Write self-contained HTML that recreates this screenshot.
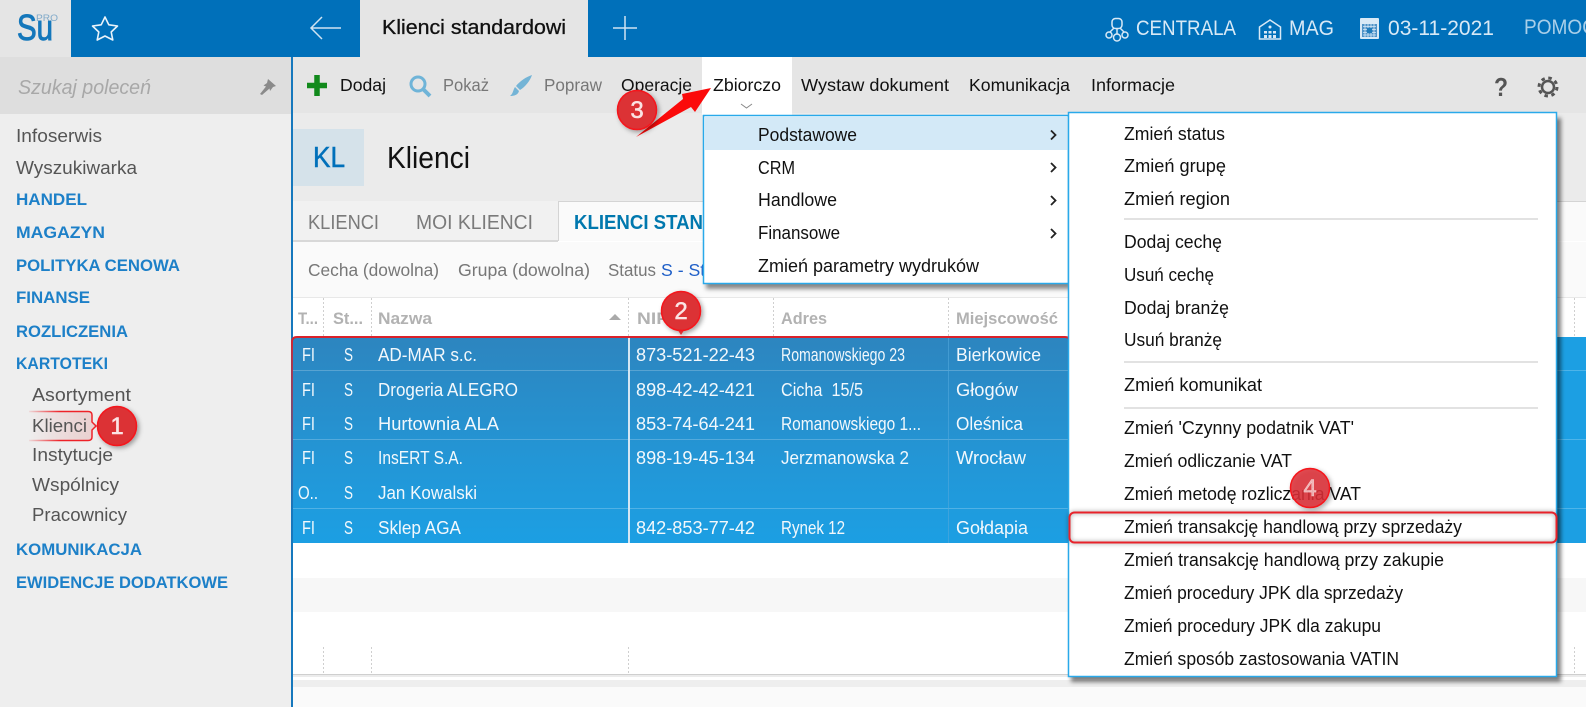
<!DOCTYPE html>
<html lang="pl"><head><meta charset="utf-8"><title>Klienci standardowi</title>
<style>
html,body{margin:0;padding:0;width:1586px;height:707px;overflow:hidden;background:#fff}
svg{display:block}
text{font-family:"Liberation Sans",sans-serif;font-size:18px;fill:#111}
.side{fill:#555;font-size:18.500px}
.hd{font-weight:bold;fill:#1d80c8;font-size:17px}
.top{fill:#d8e9f6;font-size:21px}
.tb{font-size:17.500px}
.gr{fill:#777}
.th{font-weight:bold;fill:#b2b2b2;font-size:17px}
.row{fill:#f2f8fc;font-size:18px}
.badge{fill:#fbe4e4;font-size:24px;stroke:#fbe4e4;stroke-width:.5;text-anchor:middle}
</style></head><body>
<svg width="1586" height="707" viewBox="0 0 1586 707" xmlns="http://www.w3.org/2000/svg">
<defs>
<linearGradient id="sel" x1="0" y1="0" x2="0" y2="1"><stop offset="0" stop-color="#2d85bf"/><stop offset=".6" stop-color="#2396d6"/><stop offset="1" stop-color="#1c9fe3"/></linearGradient>
<linearGradient id="fadeDown" x1="0" y1="336" x2="0" y2="510" gradientUnits="userSpaceOnUse"><stop offset="0" stop-color="#dc2028"/><stop offset=".1" stop-color="#dc2028" stop-opacity=".8"/><stop offset="1" stop-color="#dc2028" stop-opacity="0"/></linearGradient>
<linearGradient id="fadeL" x1="29" y1="0" x2="60" y2="0" gradientUnits="userSpaceOnUse"><stop offset="0" stop-color="#ee2228" stop-opacity=".1"/><stop offset="1" stop-color="#ee2228"/></linearGradient>
<linearGradient id="pink" x1="0" y1="0" x2="1" y2="0"><stop offset="0" stop-color="#e06060" stop-opacity="0"/><stop offset="1" stop-color="#d88" stop-opacity=".3"/></linearGradient>
<filter id="sh" x="-20%" y="-20%" width="140%" height="140%"><feGaussianBlur stdDeviation="2"/></filter>
<filter id="bs" x="-30%" y="-30%" width="170%" height="170%"><feDropShadow dx="2" dy="2" stdDeviation="2.500" flood-color="#000" flood-opacity=".35"/></filter>
</defs>

<!-- base -->
<rect width="1586" height="707" fill="#fff"/>
<rect x="0" y="57" width="291" height="650" fill="#eeeeee"/>
<rect x="0" y="57" width="291" height="57" fill="#dedede"/>
<rect x="293" y="57" width="1293" height="56" fill="#e5e5e5"/>
<rect x="293" y="113" width="1293" height="88" fill="#ebebeb"/>
<rect x="293" y="201" width="1293" height="40" fill="#f1f1f1"/>
<rect x="293" y="240" width="265" height="2" fill="#d8d8d8"/>
<rect x="558" y="201" width="1028" height="40" fill="#fafafa"/>
<rect x="558" y="201" width="1028" height="1" fill="#d4d4d4"/>
<rect x="558" y="201" width="1" height="40" fill="#d4d4d4"/>
<rect x="293" y="242" width="1293" height="55" fill="#fafafa"/>
<rect x="293" y="297" width="1293" height="1" fill="#e8e8e8"/>
<rect x="293" y="298" width="1293" height="38" fill="#fff"/>
<rect x="291" y="57" width="2" height="650" fill="#1678bd"/>

<!-- top bar -->
<rect width="1586" height="57" fill="#0070ba"/>
<rect width="71" height="57" fill="#e5e5e5"/>
<rect x="360" width="228" height="57" fill="#e5e5e5"/>
<text x="17" y="40" style="font-size:36px;fill:#1477bb;stroke:#1477bb;stroke-width:1" textLength="36" lengthAdjust="spacingAndGlyphs">Su</text>
<text x="36" y="21" style="font-size:9.500px;fill:#7fa9c9" textLength="22" lengthAdjust="spacingAndGlyphs">PRO</text>
<polygon points="105,17 108.800,24.800 117.500,26 111.200,32 112.800,40 105,36 97.200,40 98.800,32 92.500,26 101.200,24.800" fill="none" stroke="#eaf3fa" stroke-width="1.600" stroke-linejoin="round"/>
<path d="M341 28H311M322 17L311 28L322 39" fill="none" stroke="#cfe3f2" stroke-width="1.500"/>
<text x="382" y="34" style="font-size:20px;stroke:#111;stroke-width:.3" textLength="184" lengthAdjust="spacingAndGlyphs">Klienci standardowi</text>
<path d="M625 16V40M613 28H637" stroke="#cfe3f2" stroke-width="1.500" fill="none"/>
<g fill="none" stroke="#d8e9f6" stroke-width="1.500">
<rect x="1112" y="18.500" width="10" height="10" rx="3.500"/>
<path d="M1117 28.500V34M1114 28L1110 32M1120 28L1124 32"/>
<circle cx="1109" cy="35" r="3"/><circle cx="1117" cy="37.500" r="3.500"/><circle cx="1125" cy="35" r="3"/>
<path d="M1259.500 27L1270 20L1280.500 27V39H1259.500Z"/>
</g>
<g fill="#d8e9f6">
<circle cx="1270" cy="27" r="1.500"/>
<rect x="1264" y="31" width="3" height="2.500"/><rect x="1268.500" y="31" width="3" height="2.500"/><rect x="1273" y="31" width="3" height="2.500"/>
<rect x="1264" y="35" width="3" height="3"/><rect x="1268.500" y="35" width="3" height="3"/><rect x="1273" y="35" width="3" height="3"/>
<rect x="1360" y="18" width="19" height="21" rx="1"/>
</g>
<rect x="1362" y="24" width="15" height="13" fill="#4f93c8"/>
<path d="M1363 26.500H1376M1363 29.500H1376M1363 32.500H1376M1363 35H1376M1365 24V37M1368 24V37M1371 24V37M1374 24V37" stroke="#d8e9f6" stroke-width=".8" fill="none"/>
<rect x="1367" y="28" width="5" height="5" fill="#1f7cbc"/>
<text class="top" x="1136" y="35" textLength="100" lengthAdjust="spacingAndGlyphs">CENTRALA</text>
<text class="top" x="1289" y="35" textLength="45" lengthAdjust="spacingAndGlyphs">MAG</text>
<text class="top" x="1388" y="35" textLength="106" lengthAdjust="spacingAndGlyphs">03-11-2021</text>
<text class="top" x="1524" y="34" style="fill:#a9cfe9" textLength="72" lengthAdjust="spacingAndGlyphs">POMOC</text>

<!-- search -->
<text x="18" y="94" style="font-size:20px;font-style:italic;fill:#a8a8a8" textLength="133" lengthAdjust="spacingAndGlyphs">Szukaj poleceń</text>
<path d="M268 79L276 86L273 87L270 91L269.500 88.500L262 95L260 94L266 86.500L263.500 85.500L267 83Z" fill="#8a8a8a"/>

<!-- toolbar -->
<path d="M317 75V96M307 85.500H327" stroke="#128a1c" stroke-width="5.500" fill="none"/>
<text class="tb" x="340" y="91" textLength="46" lengthAdjust="spacingAndGlyphs">Dodaj</text>
<circle cx="418" cy="84" r="7" fill="none" stroke="#6fb4d8" stroke-width="3"/>
<path d="M423 89L430 96" stroke="#6fb4d8" stroke-width="4"/>
<text class="tb gr" x="443" y="91" textLength="46" lengthAdjust="spacingAndGlyphs">Pokaż</text>
<path d="M532 75C530 81 525 87 520 90L516 86C520 81 526 77 532 75Z" fill="#74b4d6"/>
<path d="M515 87L519 91C518 95 514 96 510 96C513 94 513 90 515 87Z" fill="#74b4d6"/>
<text class="tb gr" x="544" y="91" textLength="58" lengthAdjust="spacingAndGlyphs">Popraw</text>
<text class="tb" x="621" y="91" textLength="71" lengthAdjust="spacingAndGlyphs">Operacje</text>
<rect x="702" y="57" width="90" height="58" fill="#fff"/>
<text class="tb" x="713" y="91" textLength="68" lengthAdjust="spacingAndGlyphs">Zbiorczo</text>
<path d="M741 104L746.500 108L752 104" fill="none" stroke="#888" stroke-width="1"/>
<text class="tb" x="801" y="91" textLength="148" lengthAdjust="spacingAndGlyphs">Wystaw dokument</text>
<text class="tb" x="969" y="91" textLength="101" lengthAdjust="spacingAndGlyphs">Komunikacja</text>
<text class="tb" x="1091" y="91" textLength="84" lengthAdjust="spacingAndGlyphs">Informacje</text>
<text x="1494" y="96" style="font-size:26px;font-weight:bold;fill:#555" textLength="14" lengthAdjust="spacingAndGlyphs">?</text>
<circle cx="1548" cy="87" r="6" fill="none" stroke="#555" stroke-width="2.500"/>
<circle cx="1548" cy="87" r="9" fill="none" stroke="#555" stroke-width="3" stroke-dasharray="3.500 3.570"/>

<!-- sidebar -->
<text class="side" x="16" y="142" textLength="86" lengthAdjust="spacingAndGlyphs">Infoserwis</text>
<text class="side" x="16" y="174" textLength="121" lengthAdjust="spacingAndGlyphs">Wyszukiwarka</text>
<text class="hd" x="16" y="205" textLength="71" lengthAdjust="spacingAndGlyphs">HANDEL</text>
<text class="hd" x="16" y="238" textLength="89" lengthAdjust="spacingAndGlyphs">MAGAZYN</text>
<text class="hd" x="16" y="271" textLength="164" lengthAdjust="spacingAndGlyphs">POLITYKA CENOWA</text>
<text class="hd" x="16" y="303" textLength="74" lengthAdjust="spacingAndGlyphs">FINANSE</text>
<text class="hd" x="16" y="337" textLength="112" lengthAdjust="spacingAndGlyphs">ROZLICZENIA</text>
<text class="hd" x="16" y="369" textLength="92" lengthAdjust="spacingAndGlyphs">KARTOTEKI</text>
<text class="side" x="32" y="401" textLength="99" lengthAdjust="spacingAndGlyphs">Asortyment</text>
<path d="M29 411.500H88Q92 411.500 92 415V422L96 426L92 430V437Q92 440.500 88 440.500H29Z" fill="url(#pink)"/>
<path d="M29 411.500H88Q92 411.500 92 415V422L96 426L92 430V437Q92 440.500 88 440.500H29" fill="none" stroke="url(#fadeL)" stroke-width="1.500"/>
<text class="side" x="32" y="432" textLength="55" lengthAdjust="spacingAndGlyphs">Klienci</text>
<text class="side" x="32" y="461" textLength="81" lengthAdjust="spacingAndGlyphs">Instytucje</text>
<text class="side" x="32" y="491" textLength="87" lengthAdjust="spacingAndGlyphs">Wspólnicy</text>
<text class="side" x="32" y="521" textLength="95" lengthAdjust="spacingAndGlyphs">Pracownicy</text>
<text class="hd" x="16" y="555" textLength="126" lengthAdjust="spacingAndGlyphs">KOMUNIKACJA</text>
<text class="hd" x="16" y="588" textLength="212" lengthAdjust="spacingAndGlyphs">EWIDENCJE DODATKOWE</text>

<!-- heading -->
<rect x="293" y="129" width="71" height="57" fill="#d5e2ea"/>
<text x="313" y="167" style="font-size:29px;fill:#0070ba;stroke:#0070ba;stroke-width:.5" textLength="32" lengthAdjust="spacingAndGlyphs">KL</text>
<text x="387" y="168" style="font-size:31px" textLength="83" lengthAdjust="spacingAndGlyphs">Klienci</text>
<text x="308" y="229" style="font-size:20px;fill:#7a7a7a" textLength="71" lengthAdjust="spacingAndGlyphs">KLIENCI</text>
<text x="416" y="229" style="font-size:20px;fill:#7a7a7a" textLength="117" lengthAdjust="spacingAndGlyphs">MOI KLIENCI</text>
<text x="574" y="229" style="font-size:20px;font-weight:bold;fill:#0078ae" textLength="220" lengthAdjust="spacingAndGlyphs">KLIENCI STANDARDOWI</text>
<text class="gr" x="308" y="276" style="font-size:17.500px" textLength="131" lengthAdjust="spacingAndGlyphs">Cecha (dowolna)</text>
<text class="gr" x="458" y="276" style="font-size:17.500px" textLength="132" lengthAdjust="spacingAndGlyphs">Grupa (dowolna)</text>
<text class="gr" x="608" y="276" style="font-size:17.500px" textLength="48" lengthAdjust="spacingAndGlyphs">Status</text>
<text x="661" y="276" style="font-size:17.500px;fill:#1f5fc8" textLength="54" lengthAdjust="spacingAndGlyphs">S - Sta</text>

<!-- table header -->
<text class="th" x="298" y="324" textLength="20" lengthAdjust="spacingAndGlyphs">T...</text>
<text class="th" x="333" y="324" textLength="30" lengthAdjust="spacingAndGlyphs">St...</text>
<text class="th" x="378" y="324" textLength="54" lengthAdjust="spacingAndGlyphs">Nazwa</text>
<polygon points="609,320 621,320 615,314" fill="#aaa"/>
<text class="th" x="637" y="324" textLength="32" lengthAdjust="spacingAndGlyphs">NIP</text>
<text class="th" x="781" y="324" textLength="46" lengthAdjust="spacingAndGlyphs">Adres</text>
<text class="th" x="956" y="324" textLength="102" lengthAdjust="spacingAndGlyphs">Miejscowość</text>
<g stroke="#cfcfcf" stroke-width="1" stroke-dasharray="2 2" fill="none">
<path d="M323.500 298V336M371.500 298V336M628.500 298V336M773.500 298V336M948.500 298V336M1574.500 298V336"/>
<path d="M323.500 647V675M371.500 647V675M628.500 647V675M1574.500 647V675"/>
</g>

<!-- rows -->
<rect x="293" y="337" width="1293" height="206" fill="#1c9fe3"/>
<rect x="293" y="337" width="777" height="206" fill="url(#sel)"/>
<g fill="#fff" fill-opacity=".22">
<rect x="293" y="370" width="1293" height="1"/>
<rect x="293" y="439" width="1293" height="1"/>
<rect x="293" y="508" width="1293" height="1"/>
</g>
<rect x="628" y="337" width="2" height="206" fill="#d4e6f3"/>
<rect x="948" y="337" width="1" height="206" fill="#52a8dc" fill-opacity=".6"/>

<text class="row" x="302" y="361" textLength="13" lengthAdjust="spacingAndGlyphs">FI</text>
<text class="row" x="344" y="361" textLength="9" lengthAdjust="spacingAndGlyphs">S</text>
<text class="row" x="378" y="361" textLength="99" lengthAdjust="spacingAndGlyphs">AD-MAR s.c.</text>
<text class="row" x="636" y="361" textLength="119" lengthAdjust="spacingAndGlyphs">873-521-22-43</text>
<text class="row" x="781" y="361" textLength="124" lengthAdjust="spacingAndGlyphs">Romanowskiego 23</text>
<text class="row" x="956" y="361" textLength="85" lengthAdjust="spacingAndGlyphs">Bierkowice</text>

<text class="row" x="302" y="396" textLength="13" lengthAdjust="spacingAndGlyphs">FI</text>
<text class="row" x="344" y="396" textLength="9" lengthAdjust="spacingAndGlyphs">S</text>
<text class="row" x="378" y="396" textLength="140" lengthAdjust="spacingAndGlyphs">Drogeria ALEGRO</text>
<text class="row" x="636" y="396" textLength="119" lengthAdjust="spacingAndGlyphs">898-42-42-421</text>
<text class="row" x="781" y="396" textLength="82" lengthAdjust="spacingAndGlyphs" xml:space="preserve">Cicha  15/5</text>
<text class="row" x="956" y="396" textLength="62" lengthAdjust="spacingAndGlyphs">Głogów</text>

<text class="row" x="302" y="430" textLength="13" lengthAdjust="spacingAndGlyphs">FI</text>
<text class="row" x="344" y="430" textLength="9" lengthAdjust="spacingAndGlyphs">S</text>
<text class="row" x="378" y="430" textLength="121" lengthAdjust="spacingAndGlyphs">Hurtownia ALA</text>
<text class="row" x="636" y="430" textLength="119" lengthAdjust="spacingAndGlyphs">853-74-64-241</text>
<text class="row" x="781" y="430" textLength="140" lengthAdjust="spacingAndGlyphs">Romanowskiego 1...</text>
<text class="row" x="956" y="430" textLength="67" lengthAdjust="spacingAndGlyphs">Oleśnica</text>

<text class="row" x="302" y="464" textLength="13" lengthAdjust="spacingAndGlyphs">FI</text>
<text class="row" x="344" y="464" textLength="9" lengthAdjust="spacingAndGlyphs">S</text>
<text class="row" x="378" y="464" textLength="85" lengthAdjust="spacingAndGlyphs">InsERT S.A.</text>
<text class="row" x="636" y="464" textLength="119" lengthAdjust="spacingAndGlyphs">898-19-45-134</text>
<text class="row" x="781" y="464" textLength="128" lengthAdjust="spacingAndGlyphs">Jerzmanowska 2</text>
<text class="row" x="956" y="464" textLength="70" lengthAdjust="spacingAndGlyphs">Wrocław</text>

<text class="row" x="298" y="499" textLength="20" lengthAdjust="spacingAndGlyphs">O..</text>
<text class="row" x="344" y="499" textLength="9" lengthAdjust="spacingAndGlyphs">S</text>
<text class="row" x="378" y="499" textLength="99" lengthAdjust="spacingAndGlyphs">Jan Kowalski</text>

<text class="row" x="302" y="534" textLength="13" lengthAdjust="spacingAndGlyphs">FI</text>
<text class="row" x="344" y="534" textLength="9" lengthAdjust="spacingAndGlyphs">S</text>
<text class="row" x="378" y="534" textLength="83" lengthAdjust="spacingAndGlyphs">Sklep AGA</text>
<text class="row" x="636" y="534" textLength="119" lengthAdjust="spacingAndGlyphs">842-853-77-42</text>
<text class="row" x="781" y="534" textLength="64" lengthAdjust="spacingAndGlyphs">Rynek 12</text>
<text class="row" x="956" y="534" textLength="72" lengthAdjust="spacingAndGlyphs">Gołdapia</text>

<!-- lower table -->
<rect x="293" y="578" width="1293" height="34" fill="#f7f7f7"/>
<rect x="293" y="674" width="1293" height="1" fill="#cfcfcf"/>
<rect x="293" y="675" width="1293" height="2" fill="#ececec"/>
<rect x="293" y="680" width="1293" height="7" fill="#eeeeee"/>
<rect x="293" y="687" width="1293" height="20" fill="#fafafa"/>

<!-- red highlight on rows -->
<path d="M292 510V342Q292 337 297 337H1065Q1070 337 1070 342V510" fill="none" stroke="url(#fadeDown)" stroke-width="2"/>

<!-- menu 1 -->
<rect x="706" y="120" width="365" height="169" fill="#000" fill-opacity=".45" filter="url(#sh)"/>
<rect x="703.500" y="115.500" width="365" height="168" fill="#fff" stroke="#29a9ea" stroke-width="1.500"/>
<rect x="705" y="117" width="363" height="33" fill="#d3e9f7"/>
<text x="758" y="141" textLength="99" lengthAdjust="spacingAndGlyphs">Podstawowe</text>
<text x="758" y="174" textLength="37" lengthAdjust="spacingAndGlyphs">CRM</text>
<text x="758" y="206" textLength="79" lengthAdjust="spacingAndGlyphs">Handlowe</text>
<text x="758" y="239" textLength="82" lengthAdjust="spacingAndGlyphs">Finansowe</text>
<text x="758" y="272" textLength="221" lengthAdjust="spacingAndGlyphs">Zmień parametry wydruków</text>
<g fill="none" stroke="#222" stroke-width="1.800">
<path d="M1051 130.500L1055.500 135L1051 139.500"/>
<path d="M1051 163L1055.500 167.500L1051 172"/>
<path d="M1051 196L1055.500 200.500L1051 205"/>
<path d="M1051 229L1055.500 233.500L1051 238"/>
</g>

<!-- menu 2 -->
<rect x="1071" y="118" width="490" height="564" fill="#000" fill-opacity=".5" filter="url(#sh)"/>
<rect x="1068.500" y="112.500" width="488" height="564" fill="#fff" stroke="#29a9ea" stroke-width="1.500"/>
<g>
<text x="1124" y="140" textLength="101" lengthAdjust="spacingAndGlyphs">Zmień status</text>
<text x="1124" y="172" textLength="102" lengthAdjust="spacingAndGlyphs">Zmień grupę</text>
<text x="1124" y="205" textLength="106" lengthAdjust="spacingAndGlyphs">Zmień region</text>
<text x="1124" y="248" textLength="98" lengthAdjust="spacingAndGlyphs">Dodaj cechę</text>
<text x="1124" y="281" textLength="90" lengthAdjust="spacingAndGlyphs">Usuń cechę</text>
<text x="1124" y="314" textLength="105" lengthAdjust="spacingAndGlyphs">Dodaj branżę</text>
<text x="1124" y="346" textLength="98" lengthAdjust="spacingAndGlyphs">Usuń branżę</text>
<text x="1124" y="391" textLength="138" lengthAdjust="spacingAndGlyphs">Zmień komunikat</text>
<text x="1124" y="434" textLength="230" lengthAdjust="spacingAndGlyphs">Zmień 'Czynny podatnik VAT'</text>
<text x="1124" y="467" textLength="168" lengthAdjust="spacingAndGlyphs">Zmień odliczanie VAT</text>
<text x="1124" y="500" textLength="237" lengthAdjust="spacingAndGlyphs">Zmień metodę rozliczania VAT</text>
<text x="1124" y="533" textLength="338" lengthAdjust="spacingAndGlyphs">Zmień transakcję handlową przy sprzedaży</text>
<text x="1124" y="566" textLength="320" lengthAdjust="spacingAndGlyphs">Zmień transakcję handlową przy zakupie</text>
<text x="1124" y="599" textLength="279" lengthAdjust="spacingAndGlyphs">Zmień procedury JPK dla sprzedaży</text>
<text x="1124" y="632" textLength="257" lengthAdjust="spacingAndGlyphs">Zmień procedury JPK dla zakupu</text>
<text x="1124" y="665" textLength="275" lengthAdjust="spacingAndGlyphs">Zmień sposób zastosowania VATIN</text>
</g>
<g fill="#e2e2e2">
<rect x="1124" y="218" width="414" height="2"/>
<rect x="1124" y="361" width="414" height="2"/>
<rect x="1124" y="407" width="414" height="2"/>
</g>

<!-- red box on item -->
<rect x="1069.500" y="512.500" width="487" height="30" rx="5" fill="none" stroke="#000" stroke-opacity=".3" stroke-width="3" filter="url(#sh)"/>
<rect x="1069.500" y="512.500" width="487" height="30" rx="5" fill="none" stroke="#e8222a" stroke-width="2"/>

<!-- arrow -->
<polygon points="636,137 683,99 682,94 711,88 695,112 691,107" fill="#fb0a0a"/>

<!-- badges -->
<g filter="url(#bs)">
<circle cx="117" cy="426" r="19.500" fill="#dc3036" stroke="#f5141a" stroke-width="1.500"/>
<path d="M677 329L681 335L685 329" fill="#dc3036"/>
<circle cx="681" cy="311" r="19.500" fill="#dc3036" stroke="#f5141a" stroke-width="1.500"/>
<circle cx="637" cy="110" r="19.500" fill="#dc3036" stroke="#f5141a" stroke-width="1.500"/>
<circle cx="1310" cy="488" r="19.500" fill="#dc3036" fill-opacity=".85" stroke="#f5141a" stroke-width="1.500"/>
</g>
<text class="badge" x="117" y="434">1</text>
<text class="badge" x="681" y="319">2</text>
<text class="badge" x="637" y="118">3</text>
<text class="badge" x="1310" y="496" style="fill-opacity:.7;stroke-opacity:.7">4</text>
</svg>
</body></html>
